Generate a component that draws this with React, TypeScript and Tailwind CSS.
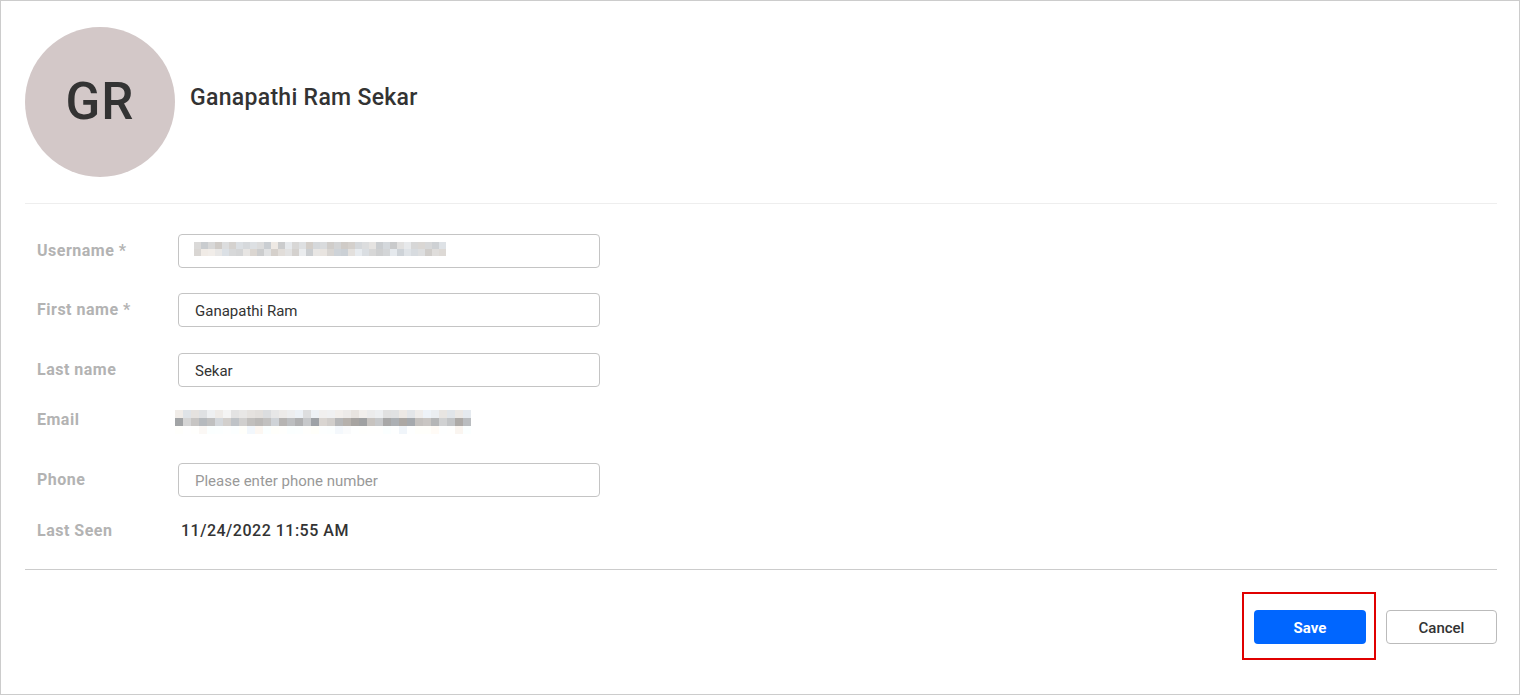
import React from 'react';

// tiny seeded generator so the blurred mosaics look the same every render
function makeRand(seed: number) {
  let s = seed;
  return () => {
    s = (s * 9301 + 49297) % 233280;
    return s / 233280;
  };
}

function Mosaic({ cols, rows, cell, seed, min, max, sparseLast }: {
  cols: number; rows: number; cell: number; seed: number; min: number[]; max: number[]; sparseLast?: boolean;
}) {
  const rand = makeRand(seed);
  const cells: React.ReactNode[] = [];
  for (let r = 0; r < rows; r++) {
    for (let c = 0; c < cols; c++) {
      const t = rand();
      let v = Math.round(min[r] + (max[r] - min[r]) * t);
      if (sparseLast && r === rows - 1 && rand() > 0.25) v = 255;
      const tint = Math.round((rand() - 0.5) * 10);
      cells.push(
        <div
          key={`${r}-${c}`}
          style={{ width: cell, height: cell, background: `rgb(${v + tint},${v},${v - tint})` }}
        />
      );
    }
  }
  return (
    <div className="grid" style={{ gridTemplateColumns: `repeat(${cols}, ${cell}px)` }}>
      {cells}
    </div>
  );
}

function Label({ children }: { children: React.ReactNode }) {
  return <div className="w-[153px] shrink-0 pl-3 text-[16px] font-bold tracking-[0.5px] text-[#b3b3b3]">{children}</div>;
}

function TextInput({ value, placeholder }: { value?: string; placeholder?: string }) {
  return (
    <input
      defaultValue={value}
      placeholder={placeholder}
      className="h-[34px] w-[422px] rounded-[4px] border border-[#c4c4c4] bg-white px-4 pt-[2px] text-[15px] text-[#333] placeholder:text-[#999] focus:outline-none"
    />
  );
}

export default function App() {
  return (
    <div className="h-[695px] w-[1520px] border border-[#cccccc] bg-white pl-6 pr-[22px] font-['Roboto',sans-serif]">
      <div className="flex items-center pt-[26px]">
        <div className="flex h-[150px] w-[150px] items-center justify-center rounded-full bg-[#d3c8c8] text-[51px] font-medium tracking-[1px] text-[#333]">
          GR
        </div>
        <div className="mb-2 ml-[15px] text-[23px] font-medium tracking-[0.3px] text-[#333]">Ganapathi Ram Sekar</div>
      </div>
      <div className="mt-[26px] h-px bg-[#eeeeee]" />

      <div className="flex flex-col">
        <div className="mt-[30px] flex items-center">
          <Label>Username *</Label>
          <div className="relative">
            <TextInput />
            <div className="absolute left-[16px] top-[8px]">
              <Mosaic cols={36} rows={2} cell={7} seed={7} min={[200, 205]} max={[235, 240]} />
            </div>
          </div>
        </div>
        <div className="mt-[25px] flex items-center">
          <Label>First name *</Label>
          <TextInput value="Ganapathi Ram" />
        </div>
        <div className="mt-[26px] flex items-center">
          <Label>Last name</Label>
          <TextInput value="Sekar" />
        </div>
        <div className="mt-[21px] flex h-[24px] items-center">
          <Label>Email</Label>
          <div className="-ml-[3px] mt-[4px]">
            <Mosaic cols={37} rows={3} cell={8} seed={11} min={[220, 160, 245]} max={[245, 215, 255]} sparseLast />
          </div>
        </div>
        <div className="mt-[31px] flex items-center">
          <Label>Phone</Label>
          <TextInput placeholder="Please enter phone number" />
        </div>
        <div className="mt-[24px] flex h-[20px] items-center">
          <Label>Last Seen</Label>
          <div className="pl-[3px] text-[16px] font-medium tracking-[0.5px] text-[#333]">11/24/2022 11:55 AM</div>
        </div>
      </div>

      <div className="mt-[28px] h-px bg-[#cccccc]" />

      <div className="mt-[40px] flex justify-end gap-[20px]">
        <div className="relative">
          <button className="h-[34px] w-[112px] rounded-[4px] bg-[#0066ff] pt-[2px] text-[15px] font-bold text-white">Save</button>
          <div className="pointer-events-none absolute -left-[12px] -top-[18px] h-[68px] w-[134px] border-2 border-[#e00000]" />
        </div>
        <button className="h-[34px] w-[111px] rounded-[4px] border border-[#bbbbbb] bg-white pt-[2px] text-[15px] font-medium text-[#333]">
          Cancel
        </button>
      </div>
    </div>
  );
}
